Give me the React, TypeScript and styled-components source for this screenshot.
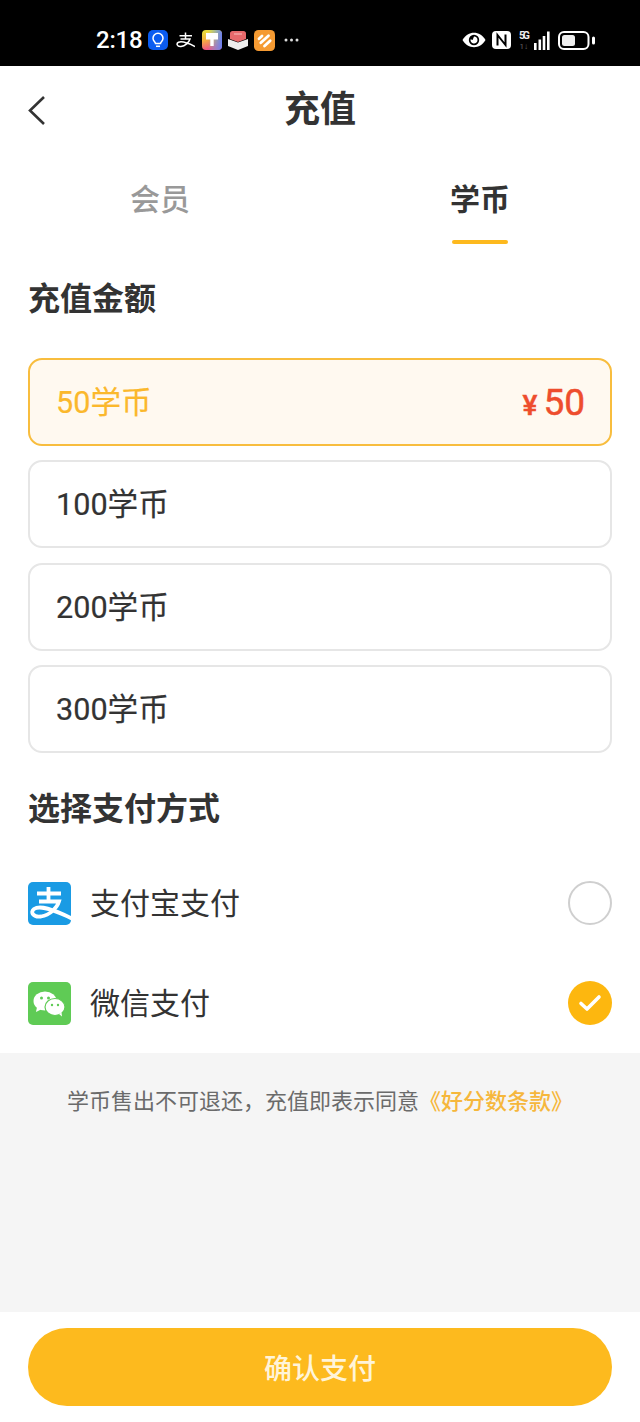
import React from 'react'
import styled, { createGlobalStyle } from 'styled-components'

const GlobalStyle = createGlobalStyle`
  html, body {
    margin: 0;
    padding: 0;
    background: #fff;
  }
  body {
    font-family: Roboto, "Noto Sans CJK SC", sans-serif;
    color: #333;
  }
  * {
    box-sizing: border-box;
  }
`

const Page = styled.div`
  width: 640px;
  height: 1422px;
  display: flex;
  flex-direction: column;
  overflow: hidden;
  background: #fff;
`

const StatusBar = styled.div`
  height: 66px;
  flex: none;
  background: #000;
  display: flex;
  align-items: center;
  justify-content: space-between;
  padding: 14px 45px 0 96px;
  color: #fff;
`

const StatusGroup = styled.div`
  display: flex;
  align-items: center;
`

const Clock = styled.span`
  font-size: 24px;
  font-weight: 500;
  width: 52px;
  letter-spacing: -0.2px;
`

const StatusIcon = styled.svg<{ $gap?: number }>`
  display: block;
  flex: none;
  margin-right: ${p => p.$gap ?? 0}px;
`

const NavBar = styled.div`
  height: 88px;
  flex: none;
  display: flex;
  align-items: center;
  justify-content: center;
  position: relative;
  padding-bottom: 8px;
`

const BackIcon = styled.svg`
  position: absolute;
  left: 28px;
  top: 29px;
`

const Title = styled.h1`
  margin: 0;
  font-size: 36px;
  font-weight: 700;
  color: #333;
`

const Tabs = styled.div`
  display: flex;
  height: 90px;
  flex: none;
`

const Tab = styled.div<{ $active?: boolean }>`
  position: relative;
  flex: 1;
  display: flex;
  justify-content: center;
  padding-top: 24px;
  font-size: 30px;
  line-height: 44px;
  font-weight: ${p => (p.$active ? 700 : 500)};
  color: ${p => (p.$active ? '#333' : '#999')};

  ${p =>
    p.$active &&
    `
    &::after {
      content: '';
      position: absolute;
      left: 132px;
      bottom: 0;
      width: 56px;
      height: 4px;
      border-radius: 2px;
      background: #fdb91e;
    }
  `}
`

const Content = styled.div`
  padding: 0 28px;
  flex: none;
`

const SectionTitle = styled.h2`
  margin: 0;
  font-size: 32px;
  line-height: 46px;
  font-weight: 700;
  color: #333;
`

const AmountTitle = styled(SectionTitle)`
  padding-top: 32px;
`

const AmountList = styled.div`
  display: flex;
  flex-direction: column;
  gap: 14.3px;
  margin-top: 36px;
`

const AmountCard = styled.div<{ $selected?: boolean }>`
  height: 88px;
  border-radius: 14px;
  padding: 0 25px 4px 26px;
  display: flex;
  align-items: center;
  justify-content: space-between;
  font-size: 30.6px;
  -webkit-text-stroke: 0.2px currentColor;
  border: 2px solid ${p => (p.$selected ? '#f8bd3e' : '#e6e6e6')};
  background: ${p => (p.$selected ? '#fff9f0' : '#fff')};
  color: ${p => (p.$selected ? '#fbb82c' : '#333')};
`

const Price = styled.span`
  display: flex;
  align-items: baseline;
  gap: 6px;
  margin-top: 4px;
  color: #ee4d2d;
  font-size: 37px;
  font-weight: 400;
  -webkit-text-stroke: 0.5px currentColor;
`

const Yen = styled.span`
  font-size: 28px;
  font-weight: 500;
`

const PayTitle = styled(SectionTitle)`
  margin-top: 33px;
`

const PayList = styled.div`
  display: flex;
  flex-direction: column;
  margin-top: 21.5px;
`

const PayRow = styled.div`
  height: 100px;
  display: flex;
  align-items: center;
  gap: 19px;
  font-size: 30px;
  color: #333;
`

const PayLabel = styled.span`
  flex: 1;
  padding-bottom: 4px;
`

const PayLogo = styled.svg`
  display: block;
  flex: none;
`

const Radio = styled.div<{ $checked?: boolean }>`
  width: 44px;
  height: 44px;
  border-radius: 50%;
  display: flex;
  align-items: center;
  justify-content: center;
  border: ${p => (p.$checked ? 'none' : '2px solid #cfcfcf')};
  background: ${p => (p.$checked ? '#fdb70f' : '#fff')};
`

const Notice = styled.div`
  flex: 1;
  background: #f5f5f5;
  padding-top: 33px;
  text-align: center;
  font-size: 22px;
  line-height: 32px;
  color: #6b6b6b;
`

const NoticeLink = styled.span`
  color: #f6b73c;
  font-weight: 500;
`

const Footer = styled.div`
  height: 110px;
  flex: none;
  background: #fff;
  padding: 16px 28px;
`

const ConfirmButton = styled.button`
  display: block;
  width: 100%;
  height: 78px;
  border: none;
  border-radius: 39px;
  background: #fdba1e;
  color: #fff4d9;
  font-family: inherit;
  font-size: 28px;
  font-weight: 500;
`

const AlipayLogo = () => (
  <PayLogo width="43" height="43" viewBox="0 0 43 43">
    <defs>
      <clipPath id="alipay-box">
        <rect width="43" height="43" rx="5" />
      </clipPath>
    </defs>
    <g clipPath="url(#alipay-box)">
      <rect width="43" height="43" fill="#1a9be4" />
      <path
        d="M9 11.500h24M20.500 5v14M11 19.500h20C29 26 22 33 13 34.500 5 35.500 2 30 6 27c6-4 18 0 38 9.500"
        fill="none"
        stroke="#fff"
        strokeWidth="3.800"
      />
    </g>
  </PayLogo>
)

const WechatLogo = () => (
  <PayLogo width="43" height="43" viewBox="0 0 43 43">
    <rect width="43" height="43" rx="5" fill="#5fcb55" />
    <ellipse cx="17" cy="19" rx="11.500" ry="9.500" fill="#fff" />
    <path d="M9 25l-1 5 5-2.500z" fill="#fff" />
    <ellipse cx="27" cy="25" rx="10" ry="8.500" fill="#fff" stroke="#5fcb55" strokeWidth="1.200" />
    <path d="M31 32l3 2.500-.5-4z" fill="#fff" />
    <circle cx="13.500" cy="16" r="1.500" fill="#5fcb55" />
    <circle cx="20.500" cy="16" r="1.500" fill="#5fcb55" />
    <circle cx="24" cy="23" r="1.200" fill="#5fcb55" />
    <circle cx="30" cy="23" r="1.200" fill="#5fcb55" />
  </PayLogo>
)

const StatusLeftIcons = () => (
  <>
    <StatusIcon width="20" height="20" viewBox="0 0 20 20" $gap={8}>
      <rect width="20" height="20" rx="5" fill="#0b5cf0" />
      <path
        d="M7.500 13.500c0-1.500-2.500-2.500-2.500-5.300a5 5 0 0 1 10 0c0 2.800-2.500 3.800-2.500 5.300z"
        fill="none"
        stroke="#fff"
        strokeWidth="1.500"
      />
      <path d="M8 16.300h4" stroke="#fff" strokeWidth="1.500" />
    </StatusIcon>
    <StatusIcon width="19" height="16" viewBox="0 0 19 16" $gap={7}>
      <path
        d="M3.500 3.800h12.500M9.500 0.500v6.500M4.500 7h9.500C13 10.500 9 14 5 14.500 1 15 0 11.500 2.500 10.300 6 8.800 12 11 19 14.500"
        fill="none"
        stroke="#fff"
        strokeWidth="1.500"
      />
    </StatusIcon>
    <StatusIcon width="20" height="20" viewBox="0 0 20 20" $gap={6}>
      <defs>
        <linearGradient id="paint-a" x1="0" y1="0" x2="0.3" y2="1">
          <stop offset="0" stopColor="#e6e83c" />
          <stop offset="0.5" stopColor="#f5b03e" />
          <stop offset="1" stopColor="#ef4f8a" />
        </linearGradient>
        <linearGradient id="paint-b" x1="0" y1="0" x2="1" y2="0">
          <stop offset="0.3" stopColor="#5ad0e8" stopOpacity="0" />
          <stop offset="1" stopColor="#6a7cf0" />
        </linearGradient>
      </defs>
      <rect width="20" height="20" rx="4" fill="url(#paint-a)" />
      <rect width="20" height="20" rx="4" fill="url(#paint-b)" />
      <path d="M4 3h12v6.500h-4.300V16H8.300V9.500H4z" fill="#fff" />
    </StatusIcon>
    <StatusIcon width="20" height="19" viewBox="0 0 20 19" $gap={6}>
      <path d="M0 8l10 3.500L20 8v7l-10 4-10-4z" fill="#eee" />
      <path d="M2 2.500C2 1 3 0 4.500 0h11C17 0 18 1 18 2.500V8l-8 3-8-3z" fill="#e8696c" />
      <path d="M6 3h8" stroke="#f3a5a5" strokeWidth="1.500" />
    </StatusIcon>
    <StatusIcon width="21" height="21" viewBox="0 0 21 21" $gap={9}>
      <rect width="21" height="21" rx="4.500" fill="#f59a32" />
      <path
        d="M5 8.700l3-2.700M6.800 12.700l7.700-7M10.500 16l5.700-5.300"
        stroke="#fff"
        strokeWidth="2.800"
        strokeLinecap="round"
      />
    </StatusIcon>
    <StatusIcon width="15" height="4" viewBox="0 0 15 4">
      <circle cx="2" cy="2" r="1.500" fill="#ddd" />
      <circle cx="7.500" cy="2" r="1.500" fill="#ddd" />
      <circle cx="13" cy="2" r="1.500" fill="#ddd" />
    </StatusIcon>
  </>
)

const StatusRightIcons = () => (
  <>
    <StatusIcon width="24" height="16" viewBox="0 0 24 16" $gap={6}>
      <path d="M0.500 8C3.500 3 7.500 0.800 12 0.800S20.500 3 23.500 8C20.500 13 16.500 15.200 12 15.200S3.500 13 0.500 8z" fill="#fff" />
      <circle cx="12" cy="8" r="5.200" fill="#000" />
      <path d="M12 4.500a3.500 3.500 0 1 1-3.400 2.700l2 .8z" fill="#fff" />
    </StatusIcon>
    <StatusIcon width="19" height="18" viewBox="0 0 19 18" $gap={8}>
      <rect width="19" height="18" rx="4" fill="#fff" />
      <path d="M5.500 14.500V4l8 10V3.500" fill="none" stroke="#000" strokeWidth="2" />
    </StatusIcon>
    <StatusIcon width="31" height="21" viewBox="0 0 31 21" $gap={8}>
      <text x="0" y="9" fontFamily="Roboto, sans-serif" fontSize="10.500" fontWeight="700" fill="#eee" textLength="11">
        5G
      </text>
      <text x="0.500" y="19" fontFamily="Roboto, sans-serif" fontSize="8" fill="#666">
        1↓
      </text>
      <rect x="15" y="13" width="2.600" height="7" fill="#fff" />
      <rect x="19.500" y="9.500" width="2.600" height="10.500" fill="#fff" />
      <rect x="23.700" y="6" width="2.600" height="14" fill="#fff" />
      <rect x="28" y="1.500" width="2.600" height="18.500" fill="#fff" />
    </StatusIcon>
    <StatusIcon width="37" height="19" viewBox="0 0 37 19">
      <rect x="1" y="1" width="29.500" height="17" rx="5" fill="none" stroke="#fff" strokeWidth="2" />
      <rect x="4" y="4" width="13" height="11" rx="2.500" fill="#eee" />
      <rect x="34" y="5.500" width="3" height="8" rx="1.500" fill="#fff" />
    </StatusIcon>
  </>
)

const amounts = [
  { id: 50, selected: true },
  { id: 100 },
  { id: 200 },
  { id: 300 },
]

export default function App() {
  return (
    <Page>
      <GlobalStyle />
      <StatusBar>
        <StatusGroup>
          <Clock>2:18</Clock>
          <StatusLeftIcons />
        </StatusGroup>
        <StatusGroup>
          <StatusRightIcons />
        </StatusGroup>
      </StatusBar>
      <NavBar>
        <BackIcon width="18" height="32" viewBox="0 0 18 32">
          <path d="M16 2L2 15.500 16 29" fill="none" stroke="#333" strokeWidth="2.600" />
        </BackIcon>
        <Title>充值</Title>
      </NavBar>
      <Tabs>
        <Tab>会员</Tab>
        <Tab $active>学币</Tab>
      </Tabs>
      <Content>
        <AmountTitle>充值金额</AmountTitle>
        <AmountList>
          {amounts.map(a => (
            <AmountCard key={a.id} $selected={a.selected}>
              <span>{a.id}学币</span>
              {a.selected && (
                <Price>
                  <Yen>¥</Yen>
                  {a.id}
                </Price>
              )}
            </AmountCard>
          ))}
        </AmountList>
        <PayTitle>选择支付方式</PayTitle>
        <PayList>
          <PayRow>
            <AlipayLogo />
            <PayLabel>支付宝支付</PayLabel>
            <Radio />
          </PayRow>
          <PayRow>
            <WechatLogo />
            <PayLabel>微信支付</PayLabel>
            <Radio $checked>
              <svg width="24" height="20" viewBox="0 0 24 20">
                <path d="M3 10.500l6 5.500L21 4" fill="none" stroke="#fff" strokeWidth="3.600" strokeLinecap="round" strokeLinejoin="round" />
              </svg>
            </Radio>
          </PayRow>
        </PayList>
      </Content>
      <Notice>
        学币售出不可退还，充值即表示同意<NoticeLink>《好分数条款》</NoticeLink>
      </Notice>
      <Footer>
        <ConfirmButton>确认支付</ConfirmButton>
      </Footer>
    </Page>
  )
}
